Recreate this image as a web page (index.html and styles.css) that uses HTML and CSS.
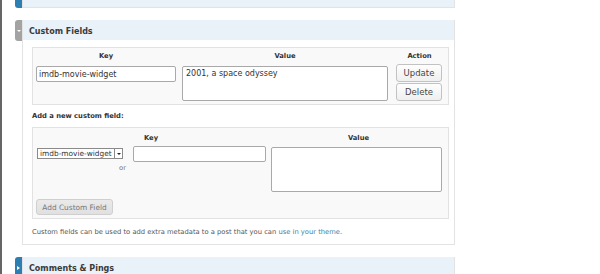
FILE: index.html
```html
<!DOCTYPE html>
<html lang="en">
<head>
    <meta charset="UTF-8">
    <title>Custom Fields</title>
    <link rel="stylesheet" href="styles.css">
</head>
<body>
    <div class="page">

        <!-- Kotak di atas (tertutup, hanya bagian bawahnya kelihatan) -->
        <div class="postbox first">
            <div class="handle blue"><span class="arrow-right"></span></div>
            <div class="box">
                <div class="hndle"></div>
            </div>
        </div>

        <!-- Custom Fields -->
        <div class="postbox">
            <div class="handle grey"><span class="arrow-down"></span></div>
            <div class="box">
                <h3 class="hndle">Custom Fields</h3>
                <div class="inside">
                    <div class="meta-table list">
                        <div class="th">Key</div>
                        <div class="th">Value</div>
                        <div class="th">Action</div>
                        <div class="td">
                            <input class="text-input key-input" type="text" value="imdb-movie-widget">
                        </div>
                        <div class="td">
                            <textarea class="text-area value-area">2001, a space odyssey</textarea>
                        </div>
                        <div class="td actions">
                            <button class="btn">Update</button>
                            <button class="btn">Delete</button>
                        </div>
                    </div>

                    <p class="add-label">Add a new custom field:</p>

                    <div class="meta-table new">
                        <div class="th">Key</div>
                        <div class="th">Value</div>
                        <div class="td key-cell">
                            <div class="select-col">
                                <div class="select-wrap">
                                    <select class="key-select">
                                        <option>imdb-movie-widget</option>
                                    </select>
                                    <span class="select-arrow"></span>
                                </div>
                                <span class="or">or</span>
                            </div>
                            <input class="text-input new-key" type="text">
                        </div>
                        <div class="td">
                            <textarea class="text-area new-value"></textarea>
                        </div>
                        <div class="submit-row">
                            <button class="btn add-btn">Add Custom Field</button>
                        </div>
                    </div>

                    <p class="note">Custom fields can be used to add extra metadata to a post that you can <a href="#">use in your theme</a>.</p>
                </div>
            </div>
        </div>

        <!-- Comments & Pings -->
        <div class="postbox">
            <div class="handle blue"><span class="arrow-right"></span></div>
            <div class="box">
                <h3 class="hndle">Comments &amp; Pings</h3>
            </div>
        </div>

    </div>
</body>
</html>
```

FILE: styles.css
```css
/* Umum */
body {
    margin: 0;
    padding: 0;
    background-color: #fff;
    color: #333;
    font-family: "DejaVu Sans", Verdana, sans-serif;
    overflow: hidden;
}

.page {
    height: 274px;
    border-left: 2px solid #666;
    padding-left: 13px;
    overflow: hidden;
}

/* Postbox */
.postbox {
    display: flex;
    align-items: flex-start;
    width: 440px;
    margin-bottom: 12px;
}

.postbox.first {
    margin-top: -13px;
}

.handle {
    width: 7px;
    height: 21px;
    flex-shrink: 0;
    border-radius: 3px 0 0 3px;
    display: flex;
    align-items: center;
    justify-content: center;
}

.handle.blue {
    background-color: #2e7fb1;
}

.handle.grey {
    background-color: #a3a3a3;
}

.arrow-right {
    width: 0;
    height: 0;
    border-top: 2px solid transparent;
    border-bottom: 2px solid transparent;
    border-left: 3px solid #fff;
}

.arrow-down {
    width: 0;
    height: 0;
    border-left: 2px solid transparent;
    border-right: 2px solid transparent;
    border-top: 2px solid #fff;
}

.box {
    flex: 1;
    border: 1px solid #e3e3e3;
    border-top: none;
    background-color: #fff;
}

.hndle {
    margin: 0;
    height: 20px;
    line-height: 24px;
    padding-left: 6px;
    background-color: #e9f1f9;
    font-size: 8px;
    font-weight: bold;
    color: #3a3a3a;
}

.inside {
    padding: 7px 5px 7px 9px;
}

/* Tabel meta */
.meta-table {
    display: grid;
    background-color: #f9f9f9;
    border: 1px solid #e2e2e2;
}

.meta-table.list {
    grid-template-columns: 146px 212px 1fr;
    padding-bottom: 3px;
}

.meta-table.new {
    grid-template-columns: 236px 1fr;
    padding-bottom: 3px;
}

.th {
    height: 16px;
    line-height: 16px;
    text-align: center;
    font-size: 6.75px;
    font-weight: bold;
    color: #333;
}

.meta-table.new .th {
    line-height: 20px;
}

.td {
    padding-top: 1px;
}

.text-input,
.text-area {
    display: block;
    box-sizing: border-box;
    margin: 0;
    border: 1px solid #a9a9a9;
    border-radius: 2px;
    background-color: #fff;
    font-family: "DejaVu Sans", Verdana, sans-serif;
    font-size: 8px;
    color: #333;
    resize: none;
    outline: none;
}

.key-input {
    width: 140px;
    height: 16px;
    margin: 1px 0 0 3px;
    padding: 0 2px;
}

.value-area {
    width: 206px;
    height: 35px;
    margin: 1px 0 0 3px;
    padding: 2px 3px;
    line-height: 10px;
}

.actions {
    padding-top: 0;
    padding-left: 5px;
    display: flex;
    flex-direction: column;
    gap: 1px;
}

.btn {
    display: block;
    box-sizing: border-box;
    margin: 0;
    padding: 0;
    border: 1px solid #c2c2c2;
    border-radius: 3px;
    background: linear-gradient(#fefefe, #efefef);
    font-family: "DejaVu Sans", Verdana, sans-serif;
    color: #464646;
    cursor: pointer;
}

.actions .btn {
    width: 46px;
    height: 18px;
    font-size: 8.5px;
}

.add-label {
    margin: 6px 0;
    line-height: 10px;
    font-size: 6.75px;
    font-weight: bold;
    color: #333;
}

/* Baris baru */
.key-cell {
    display: flex;
    align-items: flex-start;
    padding-top: 2px;
}

.select-col {
    display: flex;
    flex-direction: column;
    align-items: flex-end;
    margin: 2px 0 0 4px;
}

.select-wrap {
    display: flex;
    width: 86px;
    height: 11px;
    box-sizing: border-box;
    border: 1px solid #8a8a8a;
    background-color: #fff;
}

.key-select {
    appearance: none;
    -webkit-appearance: none;
    flex: 1;
    min-width: 0;
    margin: 0;
    padding: 0 0 0 2px;
    border: none;
    background: transparent;
    font-family: "DejaVu Sans", Verdana, sans-serif;
    font-size: 7.4px;
    line-height: 9px;
    height: 9px;
    color: #333;
    outline: none;
}

.select-arrow {
    width: 7px;
    border-left: 1px solid #8a8a8a;
    display: flex;
    align-items: center;
    justify-content: center;
}

.select-arrow::after {
    content: "";
    border-left: 2px solid transparent;
    border-right: 2px solid transparent;
    border-top: 2px solid #222;
}

.or {
    margin-top: 5px;
    margin-right: -3px;
    font-size: 6.75px;
    line-height: 8px;
    color: #777;
}

.new-key {
    width: 133px;
    height: 16px;
    margin-left: 10px;
    padding: 0 2px;
}

.new-value {
    width: 171px;
    height: 45px;
    margin: 2px 0 0 2px;
}

.submit-row {
    grid-column: 1 / -1;
    padding: 7px 0 0 3px;
}

.add-btn {
    width: 77px;
    height: 16px;
    font-size: 7.4px;
    color: #777;
    border-color: #cfcfcf;
    background: linear-gradient(#eaeaea, #e0e0e0);
}

.note {
    margin: 8px 0 0 0;
    line-height: 10px;
    font-size: 6.75px;
    color: #555;
}

.note a {
    color: #3b7fa8;
    text-decoration: none;
}
```
